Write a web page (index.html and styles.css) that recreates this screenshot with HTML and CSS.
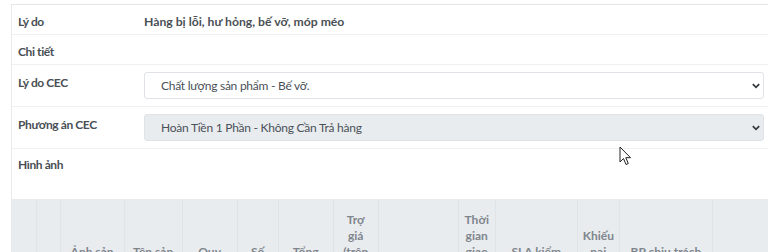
FILE: index.html
```html
<!DOCTYPE html>
<html lang="vi">
<head>
<meta charset="utf-8">
<link rel="stylesheet" href="styles.css">
</head>
<body>
<div class="page">
  <div class="card">
    <div class="row row-text">
      <div class="label">Lý do</div>
      <div class="value strong">Hàng bị lỗi, hư hỏng, bế vỡ, móp méo</div>
    </div>
    <div class="row row-text">
      <div class="label">Chi tiết</div>
      <div class="value"></div>
    </div>
    <div class="row row-select">
      <div class="label">Lý do CEC</div>
      <div class="value">
        <div class="select">
          <span>Chất lượng sản phẩm - Bế vỡ.</span>
          <svg class="chev" viewBox="0 0 10 7" width="8" height="6"><path d="M1 1.2 L5 5.2 L9 1.2" fill="none" stroke="#343a40" stroke-width="2.2"/></svg>
        </div>
      </div>
    </div>
    <div class="row row-select">
      <div class="label">Phương án CEC</div>
      <div class="value">
        <div class="select disabled">
          <span>Hoàn Tiền 1 Phần - Không Cần Trả hàng</span>
          <svg class="chev" viewBox="0 0 10 7" width="8" height="6"><path d="M1 1.2 L5 5.2 L9 1.2" fill="none" stroke="#343a40" stroke-width="2.2"/></svg>
        </div>
      </div>
    </div>
    <div class="row row-image">
      <div class="label">Hình ảnh</div>
      <div class="value"></div>
    </div>
    <table class="items">
      <thead>
        <tr>
          <th class="c1"></th>
          <th class="c2"></th>
          <th class="c3">Ảnh sản<br>phẩm</th>
          <th class="c4">Tên sản<br>phẩm</th>
          <th class="c5">Quy<br>cách</th>
          <th class="c6">Số<br>lượng</th>
          <th class="c7">Tổng<br>tiền</th>
          <th class="c8">Trợ<br>giá<br>(trên<br>SP)</th>
          <th class="c9"></th>
          <th class="c10">Thời<br>gian<br>giao<br>hàng</th>
          <th class="c11">SLA kiểm<br>tra</th>
          <th class="c12">Khiếu<br>nại<br>lần</th>
          <th class="c13">BP chịu trách<br>nhiệm</th>
          <th class="c14"></th>
        </tr>
      </thead>
    </table>
  </div>
  <svg class="cursor" width="13" height="20" viewBox="0 0 13 20"><path d="M1 1 L1 16 L4.5 12.5 L7 18.5 L9.3 17.5 L6.8 11.7 L11.5 11.7 Z" fill="#fff" stroke="#222" stroke-width="1" stroke-linejoin="round"/></svg>
</div>
</body>
</html>
```
FILE: styles.css
```css
* { box-sizing: border-box; }
html, body { margin: 0; padding: 0; background: #fff; }
body {
  font-family: "Lato", "Noto Sans", sans-serif;
  font-size: 12px;
  color: #495057;
  width: 768px;
  height: 252px;
  overflow: hidden;
}
.page {
  position: relative;
  padding: 4px 0 0 11px;
}
.card {
  border-top: 1px solid #e4e6e8;
  border-left: 1px solid #e8eaec;
  width: 800px;
}
.row {
  display: grid;
  grid-template-columns: 132px 620px;
  border-bottom: 1px solid #eef0f2;
}
.label {
  font-weight: 700;
  padding-left: 6px;
  color: #4a4f55;
  line-height: 16px;
  letter-spacing: -0.4px;
}
.value { line-height: 16px; }
.strong { font-weight: 700; color: #4a4f55; font-size: 12.2px; }
.row-text { height: 30px; align-items: center; padding-top: 4px; }
.row-select { height: 42px; }
.row-select .label { padding-top: 10px; }
.row-select .value { padding-top: 7px; }
.row-image { height: 50px; border-bottom: 0; }
.row-image .label { padding-top: 8px; }
.select {
  height: 27px;
  border: 1px solid #dfe3e7;
  border-radius: 3px;
  display: flex;
  align-items: center;
  justify-content: space-between;
  padding: 0 3px 0 16px;
  color: #495057;
  background: #fff;
  letter-spacing: -0.25px;
}
.select.disabled { background: #e9ecef; }
.chev { display: block; }
.items {
  border-collapse: collapse;
  background: #e9ecef;
  table-layout: fixed;
  width: 760px;
}
.items th {
  border-right: 1px solid #e0e4e8;
  color: #7f858c;
  font-weight: 700;
  font-size: 12px;
  line-height: 16px;
  text-align: center;
  vertical-align: bottom;
  padding: 13px 2px 8px;
  white-space: nowrap;
}
.c1 { width: 24px; }
.c2 { width: 24px; }
.c3 { width: 64px; }
.c4 { width: 58px; }
.c5 { width: 55px; }
.c6 { width: 41px; }
.c7 { width: 55px; }
.c8 { width: 45px; }
.c9 { width: 80px; }
.c10 { width: 37px; }
.c11 { width: 82px; }
.c12 { width: 42px; }
.c13 { width: 93px; }
.c14 { width: 59px; }
.cursor {
  position: absolute;
  left: 619px;
  top: 146px;
}
```
